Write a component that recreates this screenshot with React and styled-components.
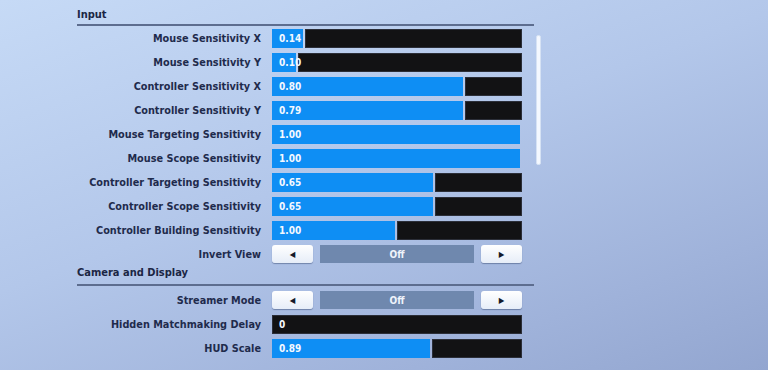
import React from 'react'
import styled, { createGlobalStyle } from 'styled-components'

const GlobalStyle = createGlobalStyle`
 html, body { margin: 0; padding: 0; }
 body {
  width: 768px;
  height: 370px;
  overflow: hidden;
  background: linear-gradient(160deg, #c6daf6 0%, #b3c7ea 45%, #9fb2da 80%, #93a6d0 100%);
  font-family: "DejaVu Sans Condensed", "DejaVu Sans", sans-serif;
 }
`

const inputRows = [
 { label: 'Mouse Sensitivity X', value: '0.14', fill: 31 },
 { label: 'Mouse Sensitivity Y', value: '0.10', fill: 24 },
 { label: 'Controller Sensitivity X', value: '0.80', fill: 191 },
 { label: 'Controller Sensitivity Y', value: '0.79', fill: 191 },
 { label: 'Mouse Targeting Sensitivity', value: '1.00', fill: 248 },
 { label: 'Mouse Scope Sensitivity', value: '1.00', fill: 248 },
 { label: 'Controller Targeting Sensitivity', value: '0.65', fill: 161 },
 { label: 'Controller Scope Sensitivity', value: '0.65', fill: 161 },
 { label: 'Controller Building Sensitivity', value: '1.00', fill: 123 },
]

export default function App() {
 return (
  <>
   <GlobalStyle />
   <Screen>
    <Panel>
     <Heading top={8}>Input</Heading>
     {inputRows.map(r => (
      <Row key={r.label}>
       <Label>{r.label}</Label>
       <Slider value={r.value} fill={r.fill} />
      </Row>
     ))}
     <Row>
      <Label>Invert View</Label>
      <Selector value="Off" />
     </Row>
     <Heading top={0} bottom={4} after={2}>Camera and Display</Heading>
     <Row>
      <Label>Streamer Mode</Label>
      <Selector value="Off" />
     </Row>
     <Row>
      <Label>Hidden Matchmaking Delay</Label>
      <Slider value="0" fill={0} />
     </Row>
     <Row>
      <Label>HUD Scale</Label>
      <Slider value="0.89" fill={158} />
     </Row>
    </Panel>
    <Scrollbar />
   </Screen>
  </>
 )
}

// full bars stop a touch short of the track end, no black part
function Slider({ value, fill }) {
 const full = fill >= 248
 return (
  <Track>
   {fill > 0 && <Fill style={{ width: fill }} />}
   {!full && <Empty />}
   <Value>{value}</Value>
  </Track>
 )
}

function Selector({ value }) {
 return (
  <SelectorWrap>
   <Arrow>◀</Arrow>
   <Choice>{value}</Choice>
   <Arrow>▶</Arrow>
  </SelectorWrap>
 )
}

const Screen = styled.div`
 display: flex;
 align-items: flex-start;
 padding-left: 77px;
`

const Panel = styled.div`
 width: 457px;
 display: flex;
 flex-direction: column;
`

const Heading = styled.div`
 padding-top: ${p => p.top}px;
 padding-bottom: ${p => p.bottom ?? 2}px;
 margin-bottom: ${p => p.after ?? 0}px;
 line-height: 14px;
 font-size: 11px;
 font-weight: bold;
 color: #1b2644;
 border-bottom: 2px solid #5d6d8f;
`

const Row = styled.div`
 height: 24px;
 display: flex;
 align-items: center;
 width: 445px;
`

const Label = styled.div`
 width: 195px;
 padding-right: 11px;
 box-sizing: border-box;
 text-align: right;
 font-size: 10.8px;
 font-weight: bold;
 color: #1f2b4c;
 white-space: nowrap;
`

const Track = styled.div`
 position: relative;
 width: 250px;
 height: 19px;
 display: flex;
 gap: 2px;
`

const Fill = styled.div`
 flex: none;
 height: 100%;
 background: #0e8ef4;
`

const Empty = styled.div`
 flex: 1;
 height: 100%;
 background: #121214;
 box-shadow: inset 0 0 0 1px #2b2e38;
`

const Value = styled.span`
 position: absolute;
 left: 7px;
 top: 0;
 line-height: 19px;
 font-size: 10px;
 font-weight: bold;
 color: #f4f8ff;
`

const SelectorWrap = styled.div`
 width: 250px;
 height: 19px;
 display: flex;
 align-items: center;
 gap: 7px;
`

const Arrow = styled.div`
 width: 41px;
 height: 18px;
 border-radius: 3px;
 background: linear-gradient(#ffffff, #e6edf8);
 box-shadow: 0 1px 1px rgba(40, 60, 100, 0.45);
 display: flex;
 align-items: center;
 justify-content: center;
 font-size: 8px;
 color: #141a2a;
`

const Choice = styled.div`
 flex: 1;
 height: 18px;
 background: #6f88ae;
 display: flex;
 align-items: center;
 justify-content: center;
 font-size: 10px;
 font-weight: bold;
 color: #eef3fb;
`

const Scrollbar = styled.div`
 margin-top: 35px;
 margin-left: 2px;
 width: 3px;
 height: 128px;
 background: #f4f8ff;
 border: 1px solid #d6e2f4;
 border-radius: 2px;
`
